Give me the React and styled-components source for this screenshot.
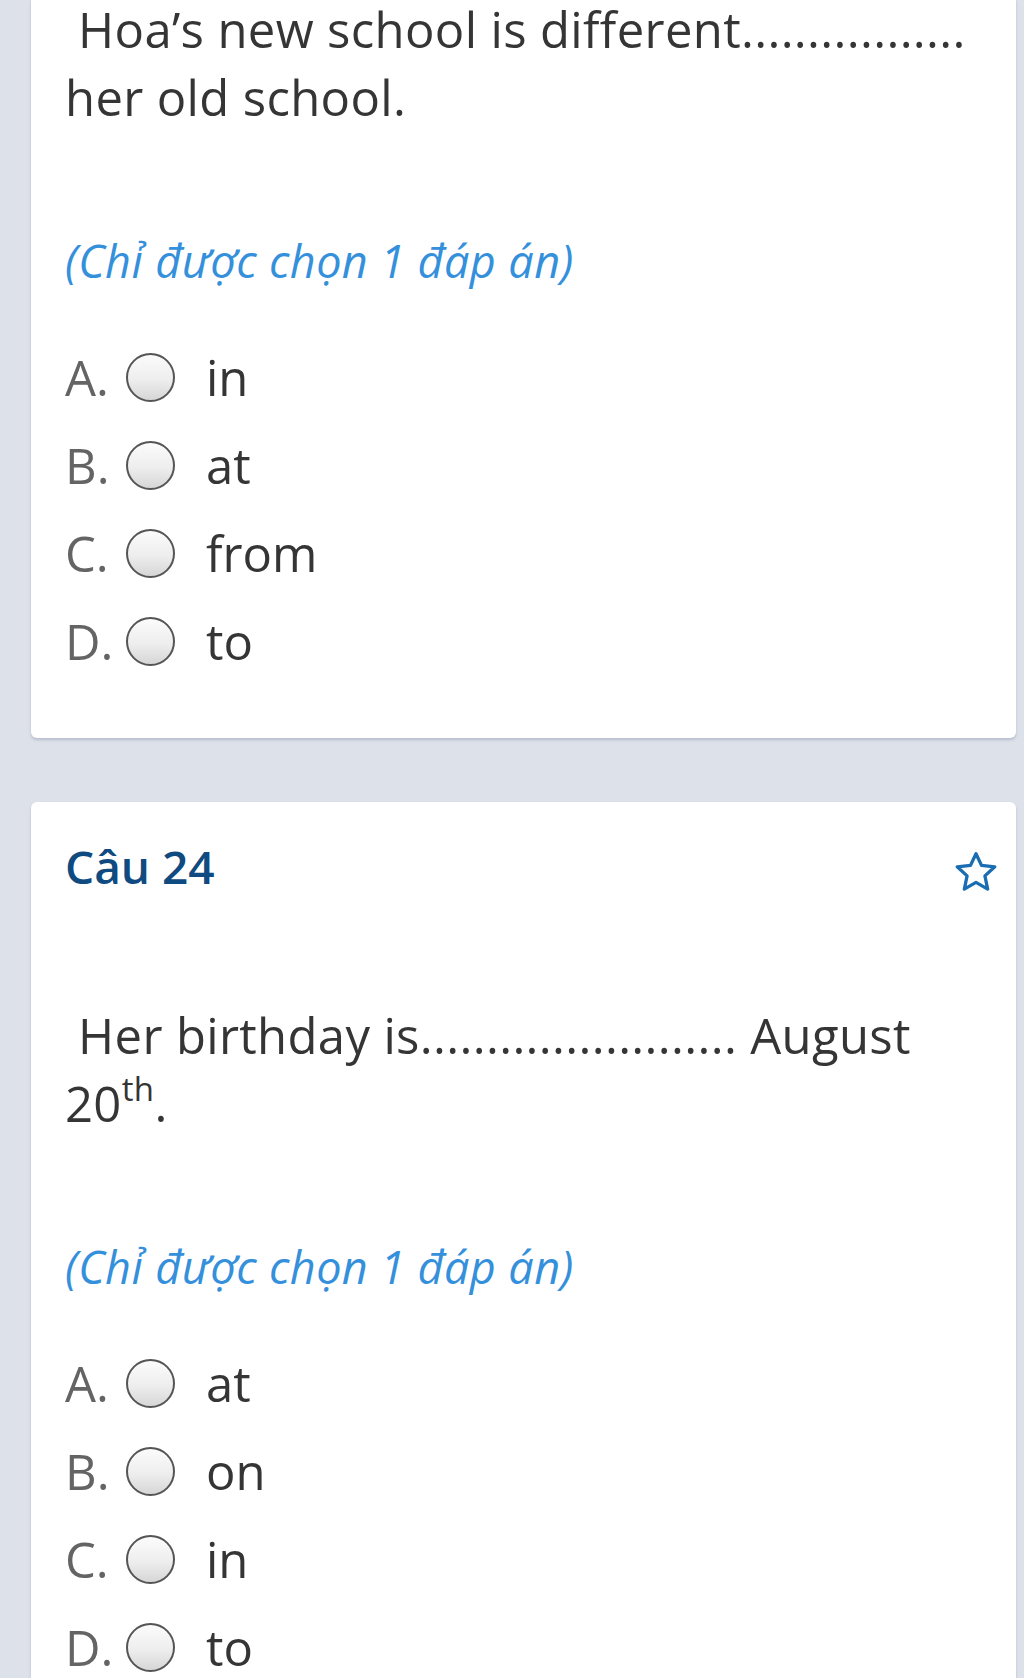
import React from "react";
import styled, { createGlobalStyle } from "styled-components";

const Global = createGlobalStyle`
  html, body {
    margin: 0;
    padding: 0;
    background: #dde1ea;
  }
  body {
    font-family: "Open Sans", "Noto Sans", sans-serif;
  }
`;

const Page = styled.div`
  padding: 0 8px 40px 31px;
  display: flex;
  flex-direction: column;
  gap: 64px;
`;

const Card = styled.section`
  background: #ffffff;
  border-radius: 6px;
  box-shadow: 0 2px 3px rgba(110, 122, 155, 0.35);
  padding: ${(p) => (p.$first ? "0" : "30px")} 22px 53px 34px;
  margin-top: ${(p) => (p.$first ? "-5px" : "0")};
`;

const Header = styled.div`
  display: flex;
  align-items: center;
  justify-content: space-between;
  height: 69px;
`;

const Heading = styled.h2`
  margin: 0;
  font-size: 46px;
  line-height: 69px;
  font-weight: 600;
  color: #0f4a80;
`;

const StarButton = styled.span`
  display: flex;
  align-items: center;
  justify-content: center;
  width: 44px;
  height: 44px;
  margin-top: 12px;
  margin-right: -4px;
  color: #1b6db3;
`;

const Question = styled.p`
  margin: ${(p) => (p.$spaced ? "100px" : "0")} 0 0 0;
  padding-right: 26px;
  font-size: 49px;
  line-height: 68px;
  letter-spacing: 0.35px;
  color: #353535;
`;

const Sup = styled.sup`
  font-size: 33px;
  line-height: 0;
  vertical-align: 21px;
`;

const Hint = styled.p`
  margin: 98px 0 0 0;
  font-size: 45px;
  line-height: 63px;
  letter-spacing: 0.4px;
  font-style: italic;
  color: #3590dc;
`;

const Options = styled.div`
  margin-top: 41px;
  display: flex;
  flex-direction: column;
`;

const OptionRow = styled.label`
  display: flex;
  align-items: center;
  height: 88px;
`;

const Letter = styled.span`
  width: 61px;
  flex: none;
  font-size: 49px;
  line-height: 68px;
  color: #646464;
`;

const Radio = styled.span`
  flex: none;
  width: 49px;
  height: 49px;
  box-sizing: border-box;
  border-radius: 50%;
  border: 2.5px solid #555555;
  background: linear-gradient(180deg, #fbfbfb 0%, #eeeeee 55%, #d6d6d6 100%);
`;

const OptionText = styled.span`
  margin-left: 31px;
  font-size: 49px;
  line-height: 68px;
  color: #353535;
`;

const Star = () => (
  <svg width="44" height="44" viewBox="0 0 40 40" fill="none">
    <polygon
      points="20,2.5 25,13.1 37.1,14.4 28.1,22.6 30.6,34.6 20,28.5 9.4,34.6 11.9,22.6 2.9,14.4 15,13.1"
      stroke="currentColor"
      strokeWidth="3"
      strokeLinejoin="round"
    />
  </svg>
);

const letters = ["A.", "B.", "C.", "D."];

const OptionList = ({ items }) => (
  <Options>
    {items.map((t, i) => (
      <OptionRow key={i}>
        <Letter>{letters[i]}</Letter>
        <Radio />
        <OptionText>{t}</OptionText>
      </OptionRow>
    ))}
  </Options>
);

const dots = (n) => ".".repeat(n);

export default function App() {
  return (
    <>
      <Global />
      <Page>
        <Card $first>
          <Question>
            {"\u00A0Hoa’s new school is different" + dots(17) + " her old school."}
          </Question>
          <Hint>(Chỉ được chọn 1 đáp án)</Hint>
          <OptionList items={["in", "at", "from", "to"]} />
        </Card>
        <Card>
          <Header>
            <Heading>Câu 24</Heading>
            <StarButton>
              <Star />
            </StarButton>
          </Header>
          <Question $spaced>
            {"\u00A0Her birthday is" + dots(24) + " August "}
            20<Sup>th</Sup>.
          </Question>
          <Hint>(Chỉ được chọn 1 đáp án)</Hint>
          <OptionList items={["at", "on", "in", "to"]} />
        </Card>
      </Page>
    </>
  );
}
